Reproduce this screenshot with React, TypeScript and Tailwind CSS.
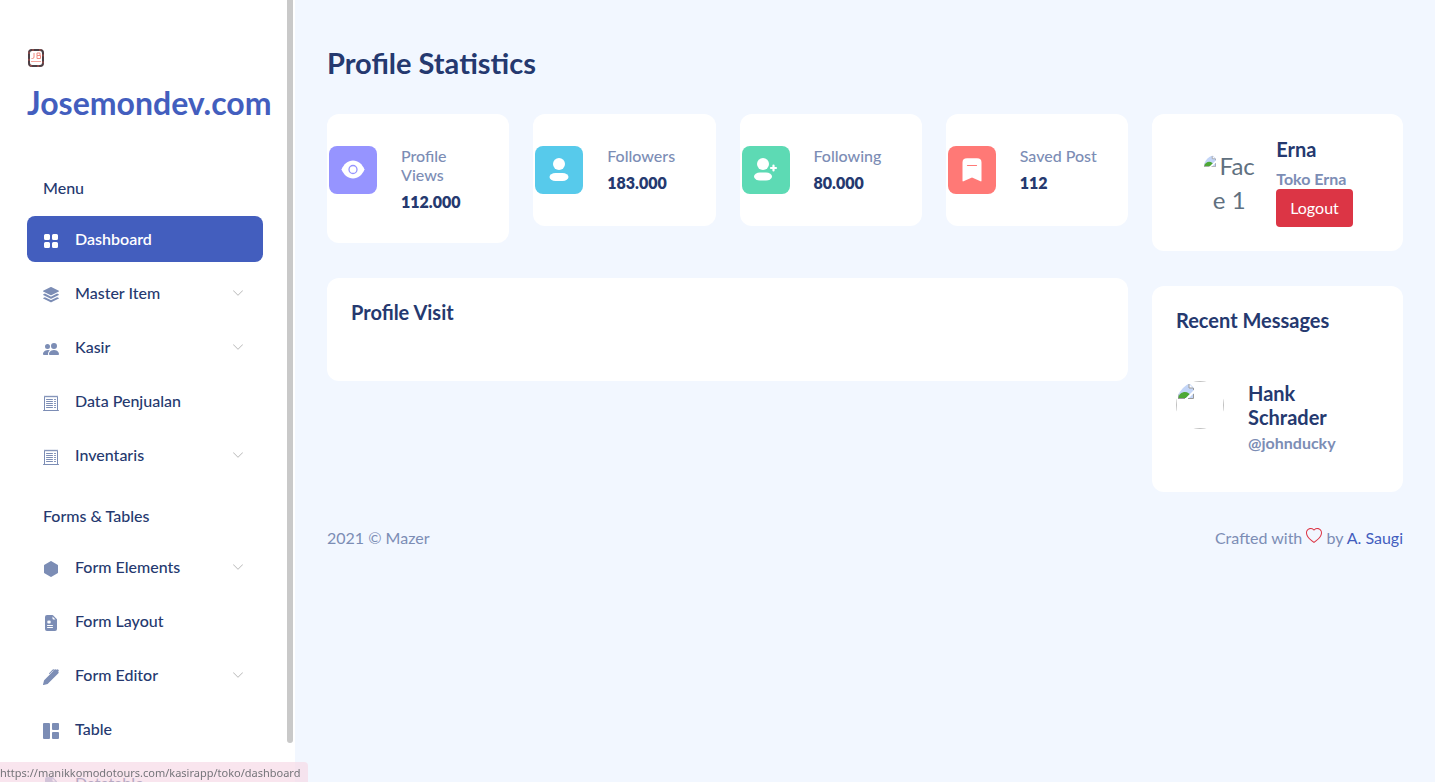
import type { ReactNode } from 'react';
import type { IconType } from 'react-icons';
import {
  BsChevronDown,
  BsFileEarmarkMedicalFill,
  BsFileEarmarkSpreadsheetFill,
  BsGrid1X2Fill,
  BsGridFill,
  BsHeart,
  BsHexagonFill,
  BsPenFill,
  BsPeopleFill,
  BsReceiptCutoff,
  BsStack,
} from 'react-icons/bs';
import { clsx } from 'clsx';

type MenuItem = {
  name: string;
  icon: IconType;
  active?: boolean;
  hasSub?: boolean;
};

const menuItems: MenuItem[] = [
  { name: 'Dashboard', icon: BsGridFill, active: true },
  { name: 'Master Item', icon: BsStack, hasSub: true },
  { name: 'Kasir', icon: BsPeopleFill, hasSub: true },
  { name: 'Data Penjualan', icon: BsReceiptCutoff },
  { name: 'Inventaris', icon: BsReceiptCutoff, hasSub: true },
];

const formItems: MenuItem[] = [
  { name: 'Form Elements', icon: BsHexagonFill, hasSub: true },
  { name: 'Form Layout', icon: BsFileEarmarkMedicalFill },
  { name: 'Form Editor', icon: BsPenFill, hasSub: true },
  { name: 'Table', icon: BsGrid1X2Fill },
  { name: 'Datatable', icon: BsFileEarmarkSpreadsheetFill },
];

function LogoIcon() {
  return (
    <svg viewBox="0 0 18 20" className="h-5 w-[18px]" fill="none" aria-hidden="true">
      <rect x="1" y="1" width="16" height="18" rx="4" fill="#f3b8b4" />
      <rect x="2" y="2" width="14" height="16" rx="3" fill="#fff" stroke="#4a3f45" strokeWidth="2" />
      <rect x="2" y="2" width="14" height="16" rx="3" stroke="#c8524c" strokeWidth="1" strokeDasharray="2 5" />
      <path d="M7 5v4q0 1.500-1.500 1.500H4.500M10 5h3v2.500h-3zM10 7.500h3.500v3H10z" stroke="#f08a80" />
      <path d="M4 13.500h10" stroke="#f3a49c" />
    </svg>
  );
}

function EyeIcon() {
  return (
    <svg viewBox="0 0 24 24" className="size-6" aria-hidden="true">
      <path d="M12 2.500C6.800 2.500 2.700 6.300.5 11.500c2.200 5.200 6.300 9 11.500 9s9.300-3.800 11.500-9C21.300 6.300 17.200 2.500 12 2.500Z" fill="#fff" />
      <circle cx="12" cy="11.500" r="4" fill="none" stroke="#9694ff" strokeWidth="1.300" />
    </svg>
  );
}

function ProfileIcon() {
  return (
    <svg viewBox="0 0 24 24" className="size-6" fill="#fff" aria-hidden="true">
      <circle cx="12" cy="6" r="6" />
      <rect x="2.500" y="15" width="19" height="8" rx="6" ry="4" />
    </svg>
  );
}

function AddUserIcon() {
  return (
    <svg viewBox="0 0 24 24" className="size-6" fill="#fff" aria-hidden="true">
      <circle cx="9" cy="6" r="6" />
      <rect x="0" y="14.500" width="18" height="8" rx="6" ry="4" />
      <path d="M19.500 7.500v5M17 10h5" stroke="#fff" strokeWidth="2.200" strokeLinecap="round" />
    </svg>
  );
}

function BookmarkIcon() {
  return (
    <svg viewBox="0 0 24 24" className="size-6" aria-hidden="true">
      <path d="M2.500 4.500C2.500 1.500 4 .3 7 .3h10c3 0 4.500 1.200 4.500 4.200v18.300c0 .6-.5.8-1 .5L12 19.500l-8.500 3.800c-.5.300-1 .1-1-.5Z" fill="#fff" />
      <path d="M7.500 7.500h9" stroke="#ff7976" strokeWidth="1.200" strokeLinecap="round" />
    </svg>
  );
}

function MissingImage({ className }: { className?: string }) {
  return (
    <svg viewBox="0 0 16 16" className={className} aria-hidden="true">
      <path d="M0 8A11 11 0 0 1 8 1h4l4 4v10H0Z" fill="#c3d5f7" />
      <path d="M11 1v4h4" fill="#fff" stroke="#9a9a9a" />
      <path d="M0 15c1-4 4-6 7-6s4 2 5 2l-4 4Z" fill="#4ea836" />
      <path d="m7 16 9-9v3l-6 6Z" fill="#fff" />
      <path d="M0 8v7.500h7M10 15.500h5.500V11M15.500 7V5" fill="none" stroke="#9a9a9a" />
    </svg>
  );
}

const stats = [
  { label: 'Profile Views', value: '112.000', color: 'bg-[#9694ff]', icon: <EyeIcon /> },
  { label: 'Followers', value: '183.000', color: 'bg-[#57caeb]', icon: <ProfileIcon /> },
  { label: 'Following', value: '80.000', color: 'bg-[#5ddab4]', icon: <AddUserIcon /> },
  { label: 'Saved Post', value: '112', color: 'bg-[#ff7976]', icon: <BookmarkIcon /> },
];

function Card({ children, className }: { children: ReactNode; className?: string }) {
  return <section className={clsx('rounded-xl bg-white', className)}>{children}</section>;
}

function SidebarMenu({ title, items }: { title: string; items: MenuItem[] }) {
  return (
    <div>
      <h2 className="px-4 font-medium leading-6">{title}</h2>
      <ul className="mt-4 flex flex-col gap-2">
        {items.map(({ name, icon: Icon, active, hasSub }) => (
          <li key={name}>
            <a
              href="#"
              className={clsx(
                'flex h-[46px] items-center gap-4 rounded-lg px-4',
                active ? 'bg-[#435ebe] font-semibold text-white' : 'font-medium'
              )}
            >
              <Icon className={clsx('mt-1 size-4', active ? 'text-white' : 'text-[#7c8db5]')} />
              <span className="flex-1">{name}</span>
              {hasSub && <BsChevronDown className="mr-[3px] size-3 text-[#b8b8b8]" />}
            </a>
          </li>
        ))}
      </ul>
    </div>
  );
}

function Sidebar() {
  return (
    <aside className="sticky top-0 h-screen w-[295px] shrink-0 overflow-hidden bg-white">
      <div className="pl-[27px] pt-12">
        <a href="#" className="block text-[32px] font-bold leading-[38px] text-[#435ebe]">
          <LogoIcon />
          <span className="mt-4 block">Josemondev.com</span>
        </a>
      </div>
      <nav className="flex flex-col gap-[26px] pl-[27px] pr-8 pt-[54px]">
        <SidebarMenu title="Menu" items={menuItems} />
        <SidebarMenu title="Forms &amp; Tables" items={formItems} />
      </nav>
      <div className="absolute right-[2px] top-0 h-[95%] w-[6px] rounded-b-full bg-[#c9c9c9]" />
    </aside>
  );
}

export default function App() {
  return (
    <div className="flex min-h-screen bg-[#f2f7ff] font-[Lato,sans-serif] text-base text-[#25396f]">
      <Sidebar />

      <div className="min-w-0 flex-1 px-8 pt-11">
        <h1 className="text-[29px] font-bold leading-[38px]">Profile Statistics</h1>

        <main className="mt-8 grid grid-cols-12 gap-6">
          <div className="col-span-9 flex flex-col gap-[35px]">
            <div className="grid grid-cols-4 items-start gap-6">
              {stats.map((stat) => (
                <Card key={stat.label} className="flex gap-6 py-8 pl-[2px] pr-6">
                  <div className={clsx('flex size-12 shrink-0 items-center justify-center rounded-lg', stat.color)}>
                    {stat.icon}
                  </div>
                  <div className="leading-[19px]">
                    <h2 className="font-medium text-[#7c8db5]">{stat.label}</h2>
                    <p className="mt-2 font-extrabold">{stat.value}</p>
                  </div>
                </Card>
              ))}
            </div>
            <Card className="px-6 pb-[58px] pt-6">
              <h2 className="text-xl font-bold leading-[21px]">Profile Visit</h2>
            </Card>
          </div>

          <div className="col-span-3 flex flex-col gap-[35px]">
            <Card className="flex items-center justify-center gap-5 py-6">
              <div className="w-[54px] text-center text-2xl leading-[34px] text-[#607080]">
                <MissingImage className="mr-1 inline-block size-3 rounded-tl-full align-[8px]" />
                Fac
                <br />e 1
              </div>
              <div>
                <h2 className="text-xl font-bold leading-[22px]">Erna</h2>
                <p className="mt-2 font-bold leading-[21px] text-[#7c8db5]">Toko Erna</p>
                <button type="button" className="h-[38px] rounded bg-[#dc3545] px-3.5 text-white">
                  Logout
                </button>
              </div>
            </Card>

            <Card className="px-6 pb-10 pt-6">
              <h2 className="text-xl font-bold leading-[21px]">Recent Messages</h2>
              <div className="mt-[50px] flex gap-6 pr-6">
                <div className="size-12 shrink-0 overflow-hidden rounded-full">
                  <div className="size-full border border-[#c0c0c0] p-px">
                    <MissingImage className="size-4" />
                  </div>
                </div>
                <div>
                  <h3 className="text-xl font-bold leading-6">Hank Schrader</h3>
                  <p className="mt-1 font-bold leading-[19px] text-[#7c8db5]">@johnducky</p>
                </div>
              </div>
            </Card>
          </div>
        </main>

        <footer className="flex justify-between py-[34px] leading-6 text-[#7c8db5]">
          <p>2021 © Mazer</p>
          <p>
            Crafted with <BsHeart className="inline size-4 align-baseline text-[#dc3545]" /> by{' '}
            <a href="#" className="text-[#435ebe]">
              A. Saugi
            </a>
          </p>
        </footer>
      </div>

      <div className="fixed bottom-0 left-0 h-5 rounded-tr bg-[#f6dae7]/70 pr-2 font-['Noto_Sans',sans-serif] text-[11px] leading-[22px] text-[#75757a]">
        https://manikkomodotours.com/kasirapp/toko/dashboard
      </div>
    </div>
  );
}
